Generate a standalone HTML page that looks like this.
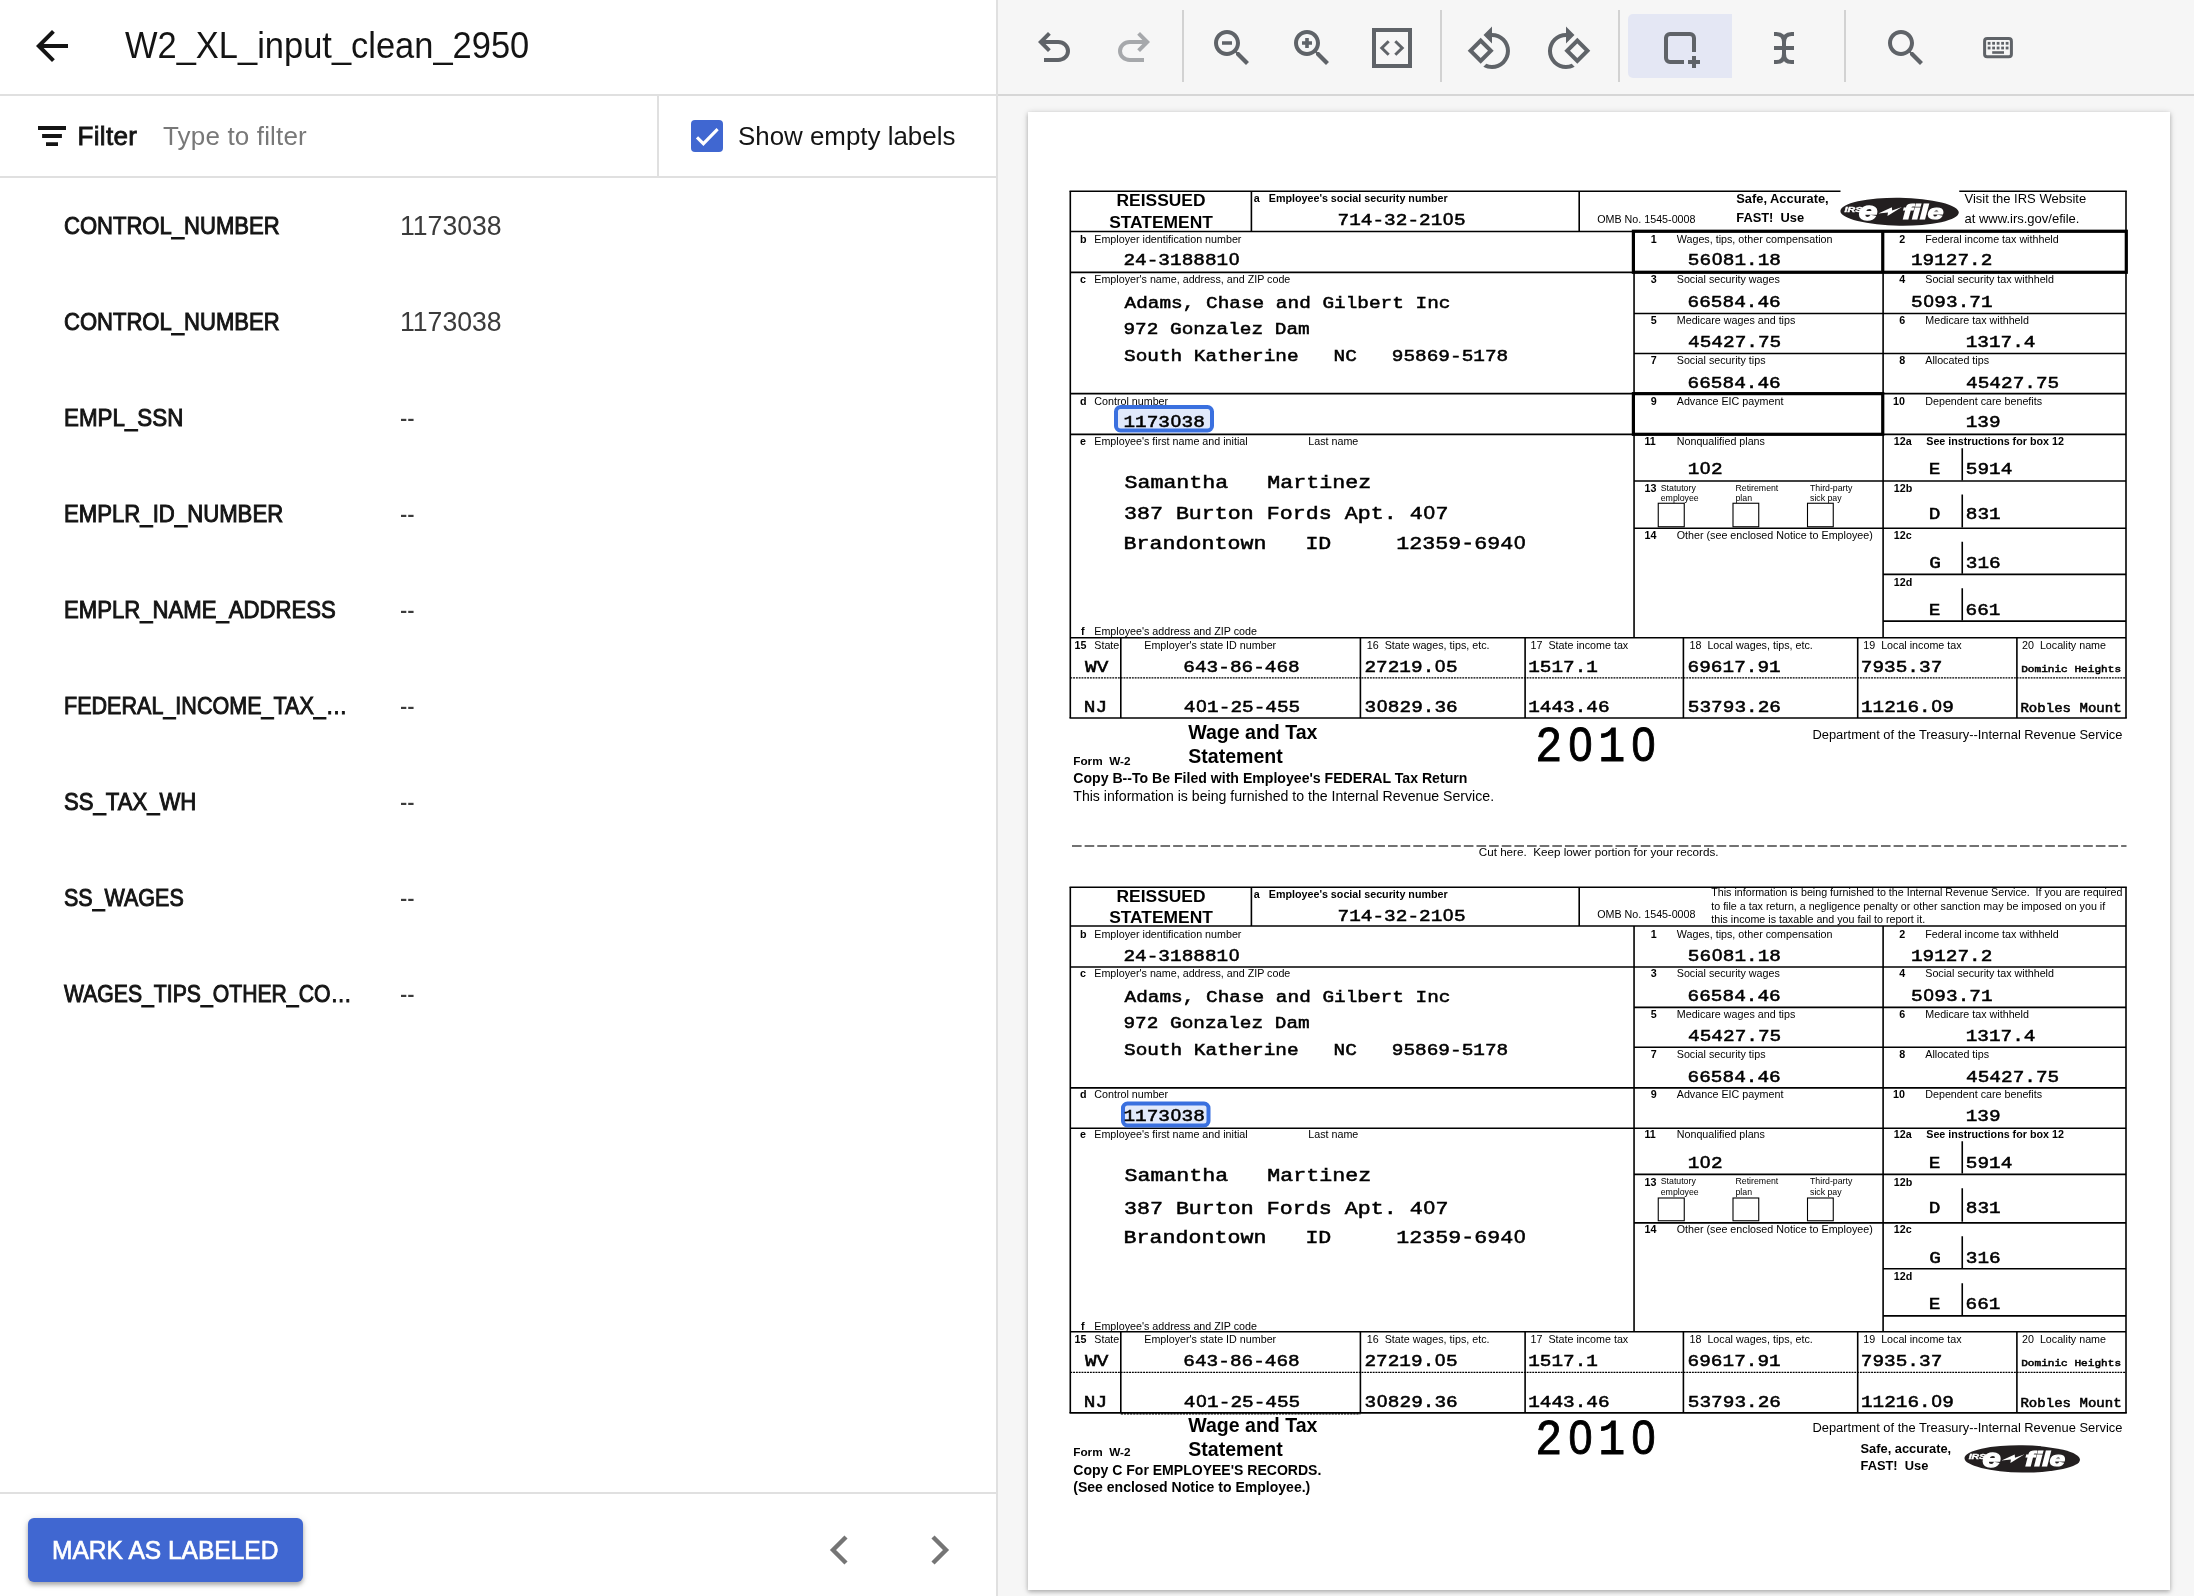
<!DOCTYPE html>
<html lang="en"><head><meta charset="utf-8"><title>W2_XL_input_clean_2950</title>
<style>
html,body{margin:0;padding:0}
body{width:2194px;height:1596px;overflow:hidden;position:relative;background:#fff;font-family:"Liberation Sans",Arial,sans-serif;color:#141414}
.abs{position:absolute}
#left{position:absolute;left:0;top:0;width:996px;height:1596px;background:#fff}
#vdiv{position:absolute;left:996px;top:0;width:2px;height:1596px;background:#e0e0e0}
#right{position:absolute;left:998px;top:0;width:1196px;height:1596px;background:#f6f6f6}
.hline{position:absolute;height:2px;background:#e0e0e0}
.title{position:absolute;left:125.3px;top:23.8px;font-size:36px;line-height:44px;white-space:nowrap;transform-origin:left center;color:#141414}
.lab{position:absolute;left:64px;height:40px;line-height:40px;font-size:24px;white-space:nowrap;transform-origin:left center;color:#141414;-webkit-text-stroke:0.95px #141414}
.val{position:absolute;height:40px;line-height:40px;font-size:28px;white-space:nowrap;transform-origin:left center;color:#3b3b3b}
.filt{position:absolute;top:116px;height:40px;line-height:40px;font-size:26px;white-space:nowrap}
#btn{position:absolute;left:28px;top:1518px;width:275px;height:64px;border-radius:6px;background:#4067d1;box-shadow:0 3px 4px rgba(0,0,0,.28),0 1px 8px rgba(0,0,0,.12)}
#btn span{position:absolute;left:24px;top:12px;line-height:40px;font-size:26px;color:#fff;white-space:nowrap;transform-origin:left center;-webkit-text-stroke:0.7px #fff}
#paper{position:absolute;left:1028px;top:112px;width:1142px;height:1478px;background:#fff;box-shadow:0 1px 6px rgba(0,0,0,.22),0 2px 4px rgba(0,0,0,.16)}
svg.doc{position:absolute;left:0;top:0;will-change:transform}
#left,#right{will-change:transform}
svg.doc .fs{font-family:"Liberation Sans",Arial,sans-serif}
svg.doc .fm{font-family:"Liberation Mono","Courier New",monospace;stroke:#000;stroke-width:0.6px}
svg.doc .b{font-weight:bold}
svg.doc text{white-space:pre}
svg.doc .yr{stroke-width:0.9px}
svg.doc .z{font-family:"Liberation Sans",Arial,sans-serif}
.sep{position:absolute;top:10px;width:2px;height:72px;background:#d2d2d2}
svg.ic{position:absolute;overflow:visible}
</style></head><body>
<div id="left">
<svg class="ic" style="left:36px;top:30px" width="32" height="32" viewBox="0 0 16 16"><path d="M16 7H3.83l5.59-5.59L8 0 0 8l8 8 1.41-1.41L3.83 9H16z" fill="#141414"/></svg>
<div class="title" style="transform:scaleX(0.9572)">W2_XL_input_clean_2950</div>
<div class="hline" style="left:0;top:94px;width:996px"></div>
<svg class="ic" style="left:38px;top:126px" width="28" height="20" viewBox="0 0 28 20"><path d="M0 0h28v3.900H0zM4.100 8.100h19.800V12H4.100zM8 16.200h12V20H8z" fill="#141414"/></svg>
<div class="filt" style="left:77.6px;color:#141414;letter-spacing:0.3px;-webkit-text-stroke:0.8px #141414">Filter</div>
<div class="filt" style="left:163px;color:#787878;letter-spacing:0.16px">Type to filter</div>
<div class="abs" style="left:657px;top:96px;width:2px;height:80px;background:#e0e0e0"></div>
<div class="abs" style="left:691px;top:120px;width:32px;height:32px;border-radius:4px;background:#4067d1"></div>
<svg class="ic" style="left:691px;top:120px" width="32" height="32" viewBox="0 0 32 32"><path d="M6 17.4L12.4 23.700L26.600 9.200" fill="none" stroke="#fff" stroke-width="3.1"/></svg>
<div class="filt" style="left:738px;color:#141414;transform-origin:left center;transform:scaleX(0.9960)">Show empty labels</div>
<div class="hline" style="left:0;top:176px;width:996px"></div>
<div class="lab" style="top:206px;transform:scaleX(0.9185)">CONTROL_NUMBER</div>
<div class="val" style="top:206px;left:400.3px;transform:scaleX(0.9499)">1173038</div>
<div class="lab" style="top:302px;transform:scaleX(0.9185)">CONTROL_NUMBER</div>
<div class="val" style="top:302px;left:400.3px;transform:scaleX(0.9499)">1173038</div>
<div class="lab" style="top:398px;transform:scaleX(0.9317)">EMPL_SSN</div>
<div class="val" style="top:398px;left:400px;transform:scaleX(0.78)">--</div>
<div class="lab" style="top:494px;transform:scaleX(0.9233)">EMPLR_ID_NUMBER</div>
<div class="val" style="top:494px;left:400px;transform:scaleX(0.78)">--</div>
<div class="lab" style="top:590px;transform:scaleX(0.9217)">EMPLR_NAME_ADDRESS</div>
<div class="val" style="top:590px;left:400px;transform:scaleX(0.78)">--</div>
<div class="lab" style="top:686px;transform:scaleX(0.8978)">FEDERAL_INCOME_TAX_…</div>
<div class="val" style="top:686px;left:400px;transform:scaleX(0.78)">--</div>
<div class="lab" style="top:782px;transform:scaleX(0.9214)">SS_TAX_WH</div>
<div class="val" style="top:782px;left:400px;transform:scaleX(0.78)">--</div>
<div class="lab" style="top:878px;transform:scaleX(0.8946)">SS_WAGES</div>
<div class="val" style="top:878px;left:400px;transform:scaleX(0.78)">--</div>
<div class="lab" style="top:974px;transform:scaleX(0.8826)">WAGES_TIPS_OTHER_CO…</div>
<div class="val" style="top:974px;left:400px;transform:scaleX(0.78)">--</div>
<div class="hline" style="left:0;top:1492px;width:996px"></div>
<div id="btn"><span style="transform:scaleX(0.9441)">MARK AS LABELED</span></div>
<svg class="ic" style="left:827px;top:1534px" width="24" height="32" viewBox="0 0 24 32"><path d="M19 3L6 16l13 13" fill="none" stroke="#757575" stroke-width="4.4"/></svg>
<svg class="ic" style="left:928px;top:1534px" width="24" height="32" viewBox="0 0 24 32"><path d="M5 3l13 13L5 29" fill="none" stroke="#757575" stroke-width="4.4"/></svg>
</div>
<div id="vdiv"></div>
<div id="right">
<div class="hline" style="left:0;top:94px;width:1196px;background:#d6d6d6"></div>
</div>
<svg class="ic" style="left:1030px;top:24px" width="48" height="48" viewBox="0 -960 960 960"><path d="M280-200v-80h284q63 0 109.5-40T720-420q0-60-46.5-100T564-560H312l104 104-56 56-200-200 200-200 56 56-104 104h252q97 0 166.5 63T800-420q0 94-69.500 157T564-200H280Z" fill="#5f6368"/></svg>
<svg class="ic" style="left:1110px;top:24px" width="48" height="48" viewBox="0 -960 960 960"><path d="M396-200q-97 0-166.500-63T160-420q0-94 69.500-157T396-640h252L544-744l56-56 200 200-200 200-56-56 104-104H396q-63 0-109.500 40T240-420q0 60 46.500 100T396-280h284v80H396Z" fill="#a6a8ab"/></svg>
<div class="sep" style="left:1182px"></div>
<div class="sep" style="left:1440px"></div>
<div class="sep" style="left:1618px"></div>
<div class="sep" style="left:1844px"></div>
<svg class="ic" style="left:1208px;top:24px" width="48" height="48" viewBox="0 0 24 24"><path d="M15.5 14h-.79l-.28-.27C15.41 12.59 16 11.11 16 9.5 16 5.91 13.09 3 9.5 3S3 5.91 3 9.5 5.91 16 9.5 16c1.61 0 3.09-.59 4.23-1.57l.27.28v.79l5 4.99L20.49 19l-4.99-5zm-6 0C7.01 14 5 11.99 5 9.5S7.01 5 9.5 5 14 7.01 14 9.5 11.990 14 9.5 14zM7 8.6h5v1.8H7z" fill="#5f6368"/></svg>
<svg class="ic" style="left:1288px;top:24px" width="48" height="48" viewBox="0 0 24 24"><path d="M15.5 14h-.79l-.28-.27C15.41 12.59 16 11.11 16 9.5 16 5.91 13.09 3 9.5 3S3 5.91 3 9.5 5.91 16 9.5 16c1.61 0 3.09-.59 4.23-1.57l.27.28v.79l5 4.99L20.49 19l-4.99-5zm-6 0C7.01 14 5 11.99 5 9.5S7.01 5 9.5 5 14 7.01 14 9.5 11.990 14 9.5 14zM12 10.4h-1.600v1.600H8.600v-1.600H7V8.600h1.600V7h1.800v1.600H12v1.800z" fill="#5f6368"/></svg>
<svg class="ic" style="left:1368px;top:24px" width="48" height="48" viewBox="0 0 48 48"><rect x="6" y="6" width="36" height="36" fill="none" stroke="#5f6368" stroke-width="4"/><path d="M20.700 17.200L13.800 24l6.900 6.800M27.300 17.200L34.200 24l-6.900 6.800" fill="none" stroke="#5f6368" stroke-width="3"/></svg>
<svg class="ic" style="left:1466.3px;top:24.6px" width="48" height="48" viewBox="0 0 24 24"><path d="M7.340 6.410L.860 12.900l6.490 6.480 6.490-6.480-6.500-6.490zM3.690 12.900l3.660-3.660L11 12.900l-3.660 3.660-3.650-3.660zm15.670-6.260C17.610 4.880 15.300 4 13 4V.760L8.760 5 13 9.240V6c1.790 0 3.580.68 4.950 2.050 2.730 2.730 2.730 7.170 0 9.900C16.580 19.320 14.790 20 13 20c-.97 0-1.940-.21-2.840-.61l-1.490 1.490C10.020 21.620 11.510 22 13 22c2.300 0 4.610-.88 6.360-2.640 3.520-3.510 3.520-9.210 0-12.720z" fill="#5f6368"/></svg>
<svg class="ic" style="left:1543.800px;top:24.600px" width="48" height="48" viewBox="0 0 24 24"><path transform="translate(24,0) scale(-1,1)" d="M7.340 6.410L.860 12.900l6.490 6.480 6.490-6.480-6.500-6.490zM3.690 12.900l3.660-3.660L11 12.900l-3.660 3.660-3.650-3.660zm15.670-6.260C17.610 4.880 15.300 4 13 4V.760L8.760 5 13 9.240V6c1.790 0 3.580.68 4.950 2.050 2.730 2.730 2.730 7.170 0 9.900C16.580 19.320 14.790 20 13 20c-.97 0-1.940-.21-2.840-.61l-1.490 1.490C10.020 21.620 11.510 22 13 22c2.300 0 4.610-.88 6.360-2.640 3.520-3.510 3.520-9.210 0-12.720z" fill="#5f6368"/></svg>
<div class="abs" style="left:1628px;top:14px;width:104px;height:64px;background:#e4e7f4;border-radius:5px 0 0 5px"></div>
<svg class="ic" style="left:1656px;top:24px" width="48" height="48" viewBox="1656 24 48 48"><path d="M1684 62H1670a4 4 0 0 1-4-4V38a4 4 0 0 1 4-4H1690a4 4 0 0 1 4 4V52M1688 62H1700M1694 56V68" fill="none" stroke="#5f6368" stroke-width="4"/></svg>
<svg class="ic" style="left:1760px;top:24px" width="48" height="48" viewBox="1760 24 48 48"><path d="M1774 34h2.500q7.500 0 7.500 8V54q0 8-7.500 8H1774M1794 34h-2.500q-7.500 0-7.500 8M1784 54q0 8 7.500 8H1794M1774 48H1794" fill="none" stroke="#5f6368" stroke-width="4"/></svg>
<svg class="ic" style="left:1882px;top:24px" width="48" height="48" viewBox="0 0 24 24"><path d="M15.5 14h-.79l-.28-.27C15.41 12.59 16 11.11 16 9.5 16 5.91 13.09 3 9.5 3S3 5.91 3 9.5 5.91 16 9.5 16c1.61 0 3.09-.59 4.23-1.57l.27.28v.79l5 4.99L20.49 19l-4.99-5zm-6 0C7.01 14 5 11.99 5 9.5S7.01 5 9.5 5 14 7.01 14 9.5 11.990 14 9.5 14z" fill="#5f6368"/></svg>
<svg class="ic" style="left:1974px;top:24px" width="48" height="48" viewBox="1974 24 48 48"><rect x="1984.600" y="38.600" width="26.800" height="18.200" rx="2.600" fill="none" stroke="#5f6368" stroke-width="3"/><rect x="1987.7" y="41.9" width="2.800" height="2.800" fill="#5f6368"/><rect x="1987.7" y="46.6" width="2.800" height="2.800" fill="#5f6368"/><rect x="1992.2" y="41.9" width="2.800" height="2.800" fill="#5f6368"/><rect x="1992.2" y="46.6" width="2.800" height="2.800" fill="#5f6368"/><rect x="1996.7" y="41.9" width="2.800" height="2.800" fill="#5f6368"/><rect x="1996.7" y="46.6" width="2.800" height="2.800" fill="#5f6368"/><rect x="2001.2" y="41.9" width="2.800" height="2.800" fill="#5f6368"/><rect x="2001.2" y="46.6" width="2.800" height="2.800" fill="#5f6368"/><rect x="2005.7" y="41.9" width="2.800" height="2.800" fill="#5f6368"/><rect x="2005.7" y="46.6" width="2.800" height="2.800" fill="#5f6368"/><rect x="1992.200" y="51.200" width="11.800" height="2.600" fill="#5f6368"/></svg>
<div id="paper"></div>
<svg class="doc" width="2194" height="1596" viewBox="0 0 2194 1596">
<g stroke="#000" fill="none">
<line x1="1069.5" y1="191.25" x2="1840.5" y2="191.25" stroke-width="1.6"/>
<line x1="1959.25" y1="191.25" x2="2126.8" y2="191.25" stroke-width="1.6"/>
<line x1="1070.3" y1="191.25" x2="1070.3" y2="718" stroke-width="1.6"/>
<line x1="2126.0" y1="191.25" x2="2126.0" y2="718" stroke-width="1.6"/>
<line x1="1069.5" y1="718" x2="2126.8" y2="718" stroke-width="1.6"/>
<line x1="1070.3" y1="231.45" x2="2126.0" y2="231.45" stroke-width="1.6"/>
<line x1="1070.3" y1="272.4" x2="2126.0" y2="272.4" stroke-width="1.6"/>
<line x1="1070.3" y1="393.65" x2="2126.0" y2="393.65" stroke-width="1.6"/>
<line x1="1070.3" y1="434.4" x2="2126.0" y2="434.4" stroke-width="1.6"/>
<line x1="1070.3" y1="637.7" x2="2126.0" y2="637.7" stroke-width="1.6"/>
<line x1="1634.05" y1="313.45" x2="2126.0" y2="313.45" stroke-width="1.6"/>
<line x1="1634.05" y1="353.5" x2="2126.0" y2="353.5" stroke-width="1.6"/>
<line x1="1634.05" y1="480.95" x2="2126.0" y2="480.95" stroke-width="1.6"/>
<line x1="1634.05" y1="528.25" x2="2126.0" y2="528.25" stroke-width="1.6"/>
<line x1="1883.1" y1="574.4" x2="2126.0" y2="574.4" stroke-width="1.6"/>
<line x1="1883.1" y1="621.15" x2="2126.0" y2="621.15" stroke-width="1.6"/>
<line x1="1251.4" y1="191.25" x2="1251.4" y2="231.45" stroke-width="1.6"/>
<line x1="1579.2" y1="191.25" x2="1579.2" y2="231.45" stroke-width="1.6"/>
<line x1="1634.05" y1="231.45" x2="1634.05" y2="637.7" stroke-width="1.6"/>
<line x1="1883.1" y1="231.45" x2="1883.1" y2="637.7" stroke-width="1.6"/>
<line x1="1120.8" y1="637.7" x2="1120.8" y2="718" stroke-width="1.6"/>
<line x1="1360.4" y1="637.7" x2="1360.4" y2="718" stroke-width="1.6"/>
<line x1="1525.1" y1="637.7" x2="1525.1" y2="718" stroke-width="1.6"/>
<line x1="1683.4" y1="637.7" x2="1683.4" y2="718" stroke-width="1.6"/>
<line x1="1857.7" y1="637.7" x2="1857.7" y2="718" stroke-width="1.6"/>
<line x1="2016.9" y1="637.7" x2="2016.9" y2="718" stroke-width="1.6"/>
<line x1="1070.3" y1="677.8" x2="2126.0" y2="677.8" stroke-width="1.3" stroke-dasharray="1.9 0.9"/>
<line x1="1962.25" y1="448.25" x2="1962.25" y2="480.5" stroke-width="1.6"/>
<line x1="1962.25" y1="494.5" x2="1962.25" y2="527.5" stroke-width="1.6"/>
<line x1="1962.25" y1="541.75" x2="1962.25" y2="573.75" stroke-width="1.6"/>
<line x1="1962.25" y1="588.25" x2="1962.25" y2="620.5" stroke-width="1.6"/>
<rect x="1658.25" y="503.25" width="26.0" height="23.5" stroke-width="1.1"/>
<rect x="1733" y="503.25" width="25.75" height="23.5" stroke-width="1.1"/>
<rect x="1807.5" y="503.25" width="25.75" height="23.5" stroke-width="1.1"/>
<rect x="1633.4" y="231.25" width="492.9000000000001" height="41.0" stroke-width="3.2"/>
<line x1="1882.75" y1="231.25" x2="1882.75" y2="272.25" stroke-width="3.2"/>
<rect x="1633.4" y="393.65" width="249.3499999999999" height="40.650000000000034" stroke-width="3.2"/>
</g>
<rect x="1116" y="407" width="96" height="23.5" rx="4.5" fill="#e1e9fb" stroke="#3a70df" stroke-width="4"/>
<g fill="#000">
<text class="fs b" x="1161" y="205.75" font-size="17.4" text-anchor="middle" xml:space="preserve">REISSUED</text>
<text class="fs b" x="1161" y="227.5" font-size="17.4" text-anchor="middle" xml:space="preserve">STATEMENT</text>
<text class="fs b" x="1253.75" y="202" font-size="10.72" xml:space="preserve">a</text>
<text class="fs b" x="1268.75" y="202" font-size="10.72" xml:space="preserve">Employee's social security number</text>
<text class="fm" transform="translate(1337.55 224.5) scale(1.0 0.885)" font-size="19.4" x="0.00 11.64 23.28 34.93 46.57 58.21 69.85 81.49 93.14 105.56 116.42" xml:space="preserve">714-32-21<tspan class="z" font-size="18.59">0</tspan>5</text>
<text class="fs" x="1597.2" y="222.5" font-size="10.72" xml:space="preserve">OMB No. 1545-0008</text>
<text class="fs b" x="1080" y="242.5" font-size="10.72" xml:space="preserve">b</text>
<text class="fs" x="1094.25" y="242.5" font-size="10.72" xml:space="preserve">Employer identification number</text>
<text class="fm" transform="translate(1123.44 265) scale(1.0 0.885)" font-size="19.4" x="0.00 11.64 23.28 34.93 46.57 58.21 69.85 81.49 93.14 105.56" xml:space="preserve">24-318881<tspan class="z" font-size="18.59">0</tspan></text>
<text class="fs b" x="1080" y="283.25" font-size="10.72" xml:space="preserve">c</text>
<text class="fs" x="1094.25" y="283.25" font-size="10.72" xml:space="preserve">Employer's name, address, and ZIP code</text>
<text class="fm" transform="translate(1124.5 307.5) scale(1.0 0.885)" font-size="19.4" x="0.00 11.64 23.28 34.93 46.57 58.21 69.85 81.49 93.14 104.78 116.42 128.06 139.70 151.35 162.99 174.63 186.27 197.91 209.55 221.20 232.84 244.48 256.12 267.76 279.41 291.05 302.69 314.33" xml:space="preserve">Adams, Chase and Gilbert Inc</text>
<text class="fm" transform="translate(1123.44 334.25) scale(1.0 0.885)" font-size="19.4" x="0.00 11.64 23.28 34.93 46.57 58.21 69.85 81.49 93.14 104.78 116.42 128.06 139.70 151.35 162.99 174.63" xml:space="preserve">972 Gonzalez Dam</text>
<text class="fm" transform="translate(1124.02 360.75) scale(1.0 0.885)" font-size="19.4" x="0.00 11.64 23.28 34.93 46.57 58.21 69.85 81.49 93.14 104.78 116.42 128.06 139.70 151.35 162.99 174.63 186.27 197.91 209.55 221.20 232.84 244.48 256.12 267.76 279.41 291.05 302.69 314.33 325.97 337.62 349.26 360.90 372.54" xml:space="preserve">South Katherine   NC   95869-5178</text>
<text class="fs b" x="1080" y="404.5" font-size="10.72" xml:space="preserve">d</text>
<text class="fs" x="1094.25" y="404.5" font-size="10.72" xml:space="preserve">Control number</text>
<text class="fm" transform="translate(1123.39 426.75) scale(1.0 0.885)" font-size="19.4" x="0.00 11.64 23.28 34.93 47.35 58.21 69.85" xml:space="preserve">1173<tspan class="z" font-size="18.59">0</tspan>38</text>
<text class="fs b" x="1080" y="445" font-size="10.72" xml:space="preserve">e</text>
<text class="fs" x="1094.25" y="445" font-size="10.72" xml:space="preserve">Employee's first name and initial</text>
<text class="fs" x="1308.25" y="445" font-size="10.72" xml:space="preserve">Last name</text>
<text class="fm" transform="translate(1124.43 487.5) scale(1.0 0.885)" font-size="21.64" x="0.00 12.99 25.97 38.96 51.94 64.93 77.92 90.90 103.89 116.88 129.86 142.85 155.83 168.82 181.81 194.79 207.78 220.76 233.75" xml:space="preserve">Samantha   Martinez</text>
<text class="fm" transform="translate(1123.95 519.25) scale(1.0 0.885)" font-size="21.64" x="0.00 12.99 25.97 38.96 51.94 64.93 77.92 90.90 103.89 116.88 129.86 142.85 155.83 168.82 181.81 194.79 207.78 220.76 233.75 246.74 259.72 272.71 285.70 299.56 311.67" xml:space="preserve">387 Burton Fords Apt. 4<tspan class="z" font-size="20.73">0</tspan>7</text>
<text class="fm" transform="translate(1123.57 548.75) scale(1.0 0.885)" font-size="21.64" x="0.00 12.99 25.97 38.96 51.94 64.93 77.92 90.90 103.89 116.88 129.86 142.85 155.83 168.82 181.81 194.79 207.78 220.76 233.75 246.74 259.72 272.71 285.70 298.68 311.67 324.65 337.64 350.63 363.61 376.60 390.46" xml:space="preserve">Brandontown   ID     12359-694<tspan class="z" font-size="20.73">0</tspan></text>
<text class="fs b" x="1081" y="635" font-size="10.72" xml:space="preserve">f</text>
<text class="fs" x="1094.25" y="635" font-size="10.72" xml:space="preserve">Employee's address and ZIP code</text>
<text class="fs b" x="1650.75" y="242.5" font-size="10.72" xml:space="preserve">1</text>
<text class="fs" x="1676.75" y="242.5" font-size="10.72" xml:space="preserve">Wages, tips, other compensation</text>
<text class="fs b" x="1650.75" y="283.25" font-size="10.72" xml:space="preserve">3</text>
<text class="fs" x="1676.75" y="283.25" font-size="10.72" xml:space="preserve">Social security wages</text>
<text class="fs b" x="1650.75" y="323.5" font-size="10.72" xml:space="preserve">5</text>
<text class="fs" x="1676.75" y="323.5" font-size="10.72" xml:space="preserve">Medicare wages and tips</text>
<text class="fs b" x="1650.75" y="363.75" font-size="10.72" xml:space="preserve">7</text>
<text class="fs" x="1676.75" y="363.75" font-size="10.72" xml:space="preserve">Social security tips</text>
<text class="fs b" x="1650.75" y="404.5" font-size="10.72" xml:space="preserve">9</text>
<text class="fs" x="1676.75" y="404.5" font-size="10.72" xml:space="preserve">Advance EIC payment</text>
<text class="fs b" x="1644.5" y="445" font-size="10.72" xml:space="preserve">11</text>
<text class="fs" x="1676.75" y="445" font-size="10.72" xml:space="preserve">Nonqualified plans</text>
<text class="fs b" x="1899.25" y="242.5" font-size="10.72" xml:space="preserve">2</text>
<text class="fs" x="1925.25" y="242.5" font-size="10.72" xml:space="preserve">Federal income tax withheld</text>
<text class="fs b" x="1899.25" y="283.25" font-size="10.72" xml:space="preserve">4</text>
<text class="fs" x="1925.25" y="283.25" font-size="10.72" xml:space="preserve">Social security tax withheld</text>
<text class="fs b" x="1899.25" y="323.5" font-size="10.72" xml:space="preserve">6</text>
<text class="fs" x="1925.25" y="323.5" font-size="10.72" xml:space="preserve">Medicare tax withheld</text>
<text class="fs b" x="1899.25" y="363.75" font-size="10.72" xml:space="preserve">8</text>
<text class="fs" x="1925.25" y="363.75" font-size="10.72" xml:space="preserve">Allocated tips</text>
<text class="fs b" x="1893" y="404.5" font-size="10.72" xml:space="preserve">10</text>
<text class="fs" x="1925.25" y="404.5" font-size="10.72" xml:space="preserve">Dependent care benefits</text>
<text class="fm" transform="translate(1687.84 265) scale(1.0 0.885)" font-size="19.4" x="0.00 11.64 24.07 34.93 46.57 58.21 69.85 81.49" xml:space="preserve">56<tspan class="z" font-size="18.59">0</tspan>81.18</text>
<text class="fm" transform="translate(1687.6 307) scale(1.0 0.885)" font-size="19.4" x="0.00 11.64 23.28 34.93 46.57 58.21 69.85 81.49" xml:space="preserve">66584.46</text>
<text class="fm" transform="translate(1688.08 347) scale(1.0 0.885)" font-size="19.4" x="0.00 11.64 23.28 34.93 46.57 58.21 69.85 81.49" xml:space="preserve">45427.75</text>
<text class="fm" transform="translate(1687.6 387.5) scale(1.0 0.885)" font-size="19.4" x="0.00 11.64 23.28 34.93 46.57 58.21 69.85 81.49" xml:space="preserve">66584.46</text>
<text class="fm" transform="translate(1687.64 474.25) scale(1.0 0.885)" font-size="19.4" x="0.00 12.43 23.28" xml:space="preserve">1<tspan class="z" font-size="18.59">0</tspan>2</text>
<text class="fm" transform="translate(1910.89 265) scale(1.0 0.885)" font-size="19.4" x="0.00 11.64 23.28 34.93 46.57 58.21 69.85" xml:space="preserve">19127.2</text>
<text class="fm" transform="translate(1911.09 307) scale(1.0 0.885)" font-size="19.4" x="0.00 12.43 23.28 34.93 46.57 58.21 69.85" xml:space="preserve">5<tspan class="z" font-size="18.59">0</tspan>93.71</text>
<text class="fm" transform="translate(1965.64 347) scale(1.0 0.885)" font-size="19.4" x="0.00 11.64 23.28 34.93 46.57 58.21" xml:space="preserve">1317.4</text>
<text class="fm" transform="translate(1966.08 387.5) scale(1.0 0.885)" font-size="19.4" x="0.00 11.64 23.28 34.93 46.57 58.21 69.85 81.49" xml:space="preserve">45427.75</text>
<text class="fm" transform="translate(1965.64 426.75) scale(1.0 0.885)" font-size="19.4" x="0.00 11.64 23.28" xml:space="preserve">139</text>
<text class="fs b" x="1893.75" y="445" font-size="10.72" xml:space="preserve">12a</text>
<text class="fm" transform="translate(1928.75 474.25) scale(1.0 0.885)" font-size="19.4" x="0.00" xml:space="preserve">E</text>
<text class="fm" transform="translate(1965.84 474.25) scale(1.0 0.885)" font-size="19.4" x="0.00 11.64 23.28 34.93" xml:space="preserve">5914</text>
<text class="fs b" x="1893.75" y="492" font-size="10.72" xml:space="preserve">12b</text>
<text class="fm" transform="translate(1928.75 518.75) scale(1.0 0.885)" font-size="19.4" x="0.00" xml:space="preserve">D</text>
<text class="fm" transform="translate(1965.79 518.75) scale(1.0 0.885)" font-size="19.4" x="0.00 11.64 23.28" xml:space="preserve">831</text>
<text class="fs b" x="1893.75" y="538.75" font-size="10.72" xml:space="preserve">12c</text>
<text class="fm" transform="translate(1929.23 568.25) scale(1.0 0.885)" font-size="19.4" x="0.00" xml:space="preserve">G</text>
<text class="fm" transform="translate(1965.84 568.25) scale(1.0 0.885)" font-size="19.4" x="0.00 11.64 23.28" xml:space="preserve">316</text>
<text class="fs b" x="1893.75" y="585.75" font-size="10.72" xml:space="preserve">12d</text>
<text class="fm" transform="translate(1928.75 614.5) scale(1.0 0.885)" font-size="19.4" x="0.00" xml:space="preserve">E</text>
<text class="fm" transform="translate(1965.6 614.5) scale(1.0 0.885)" font-size="19.4" x="0.00 11.64 23.28" xml:space="preserve">661</text>
<text class="fs b" x="1926.25" y="445" font-size="10.72" xml:space="preserve">See instructions for box 12</text>
<text class="fs b" x="1644.5" y="492" font-size="10.72" xml:space="preserve">13</text>
<text class="fs" x="1660.75" y="490.75" font-size="8.75" xml:space="preserve">Statutory</text>
<text class="fs" x="1660.75" y="501.25" font-size="8.75" xml:space="preserve">employee</text>
<text class="fs" x="1735.5" y="490.75" font-size="8.75" xml:space="preserve">Retirement</text>
<text class="fs" x="1735.5" y="501.25" font-size="8.75" xml:space="preserve">plan</text>
<text class="fs" x="1810" y="490.75" font-size="8.75" xml:space="preserve">Third-party</text>
<text class="fs" x="1810" y="501.25" font-size="8.75" xml:space="preserve">sick pay</text>
<text class="fs b" x="1644.5" y="538.75" font-size="10.72" xml:space="preserve">14</text>
<text class="fs" x="1676.75" y="538.75" font-size="10.72" xml:space="preserve">Other (see enclosed Notice to Employee)</text>
<text class="fs b" x="1074.5" y="648.75" font-size="10.72" xml:space="preserve">15</text>
<text class="fs" x="1094.25" y="648.75" font-size="10.72" xml:space="preserve">State</text>
<text class="fs" x="1144.25" y="648.75" font-size="10.72" xml:space="preserve">Employer's state ID number</text>
<text class="fs" x="1366.75" y="648.75" font-size="10.72" xml:space="preserve">16  State wages, tips, etc.</text>
<text class="fs" x="1530.5" y="648.75" font-size="10.72" xml:space="preserve">17  State income tax</text>
<text class="fs" x="1689.5" y="648.75" font-size="10.72" xml:space="preserve">18  Local wages, tips, etc.</text>
<text class="fs" x="1863.25" y="648.75" font-size="10.72" xml:space="preserve">19  Local income tax</text>
<text class="fs" x="2022" y="648.75" font-size="10.72" xml:space="preserve">20  Locality name</text>
<text class="fm" transform="translate(1085.0 671.75) scale(1.0 0.885)" font-size="19.4" x="0.00 11.64" xml:space="preserve">WV</text>
<text class="fm" transform="translate(1183.34 671.75) scale(1.0 0.885)" font-size="19.4" x="0.00 11.64 23.28 34.93 46.57 58.21 69.85 81.49 93.14 104.78" xml:space="preserve">643-86-468</text>
<text class="fm" transform="translate(1364.44 671.75) scale(1.0 0.885)" font-size="19.4" x="0.00 11.64 23.28 34.93 46.57 58.21 70.64 81.49" xml:space="preserve">27219.<tspan class="z" font-size="18.59">0</tspan>5</text>
<text class="fm" transform="translate(1528.14 671.75) scale(1.0 0.885)" font-size="19.4" x="0.00 11.64 23.28 34.93 46.57 58.21" xml:space="preserve">1517.1</text>
<text class="fm" transform="translate(1687.6 671.75) scale(1.0 0.885)" font-size="19.4" x="0.00 11.64 23.28 34.93 46.57 58.21 69.85 81.49" xml:space="preserve">69617.91</text>
<text class="fm" transform="translate(1860.8 671.75) scale(1.0 0.885)" font-size="19.4" x="0.00 11.64 23.28 34.93 46.57 58.21 69.85" xml:space="preserve">7935.37</text>
<text class="fm" transform="translate(1083.75 711.5) scale(1.0 0.885)" font-size="19.4" x="0.00 11.64" xml:space="preserve">NJ</text>
<text class="fm" transform="translate(1183.83 711.5) scale(1.0 0.885)" font-size="19.4" x="0.00 12.43 23.28 34.93 46.57 58.21 69.85 81.49 93.14 104.78" xml:space="preserve">4<tspan class="z" font-size="18.59">0</tspan>1-25-455</text>
<text class="fm" transform="translate(1364.59 711.5) scale(1.0 0.885)" font-size="19.4" x="0.00 12.43 23.28 34.93 46.57 58.21 69.85 81.49" xml:space="preserve">3<tspan class="z" font-size="18.59">0</tspan>829.36</text>
<text class="fm" transform="translate(1528.14 711.5) scale(1.0 0.885)" font-size="19.4" x="0.00 11.64 23.28 34.93 46.57 58.21 69.85" xml:space="preserve">1443.46</text>
<text class="fm" transform="translate(1687.84 711.5) scale(1.0 0.885)" font-size="19.4" x="0.00 11.64 23.28 34.93 46.57 58.21 69.85 81.49" xml:space="preserve">53793.26</text>
<text class="fm" transform="translate(1860.89 711.5) scale(1.0 0.885)" font-size="19.4" x="0.00 11.64 23.28 34.93 46.57 58.21 70.64 81.49" xml:space="preserve">11216.<tspan class="z" font-size="18.59">0</tspan>9</text>
<text class="fm" transform="translate(2021.16 671.75) scale(1.0 0.885)" font-size="11.1" x="0.00 6.66 13.32 19.98 26.64 33.31 39.97 46.63 53.29 59.95 66.61 73.27 79.93 86.59 93.26" xml:space="preserve">Dominic Heights</text>
<text class="fm" transform="translate(2020.43 711.5) scale(1.0 0.885)" font-size="14.06" x="0.00 8.44 16.87 25.31 33.75 42.19 50.62 59.06 67.50 75.94 84.37 92.81" xml:space="preserve">Robles Mount</text>
<text class="fs b" x="1188.25" y="738.75" font-size="19.55" xml:space="preserve">Wage and Tax</text>
<text class="fs b" x="1188.25" y="763" font-size="19.55" xml:space="preserve">Statement</text>
<text class="fs b" x="1073.25" y="764.5" font-size="11.76" xml:space="preserve">Form  W-2</text>
<text class="fs" x="1812.5" y="738.75" font-size="12.88" xml:space="preserve">Department of the Treasury--Internal Revenue Service</text>
<text class="fm yr" transform="translate(1535.35 760.5) scale(0.9 1)" font-size="50" x="0.00 36.93 69.81 106.74" xml:space="preserve">2<tspan class="z" font-size="47.90">0</tspan>1<tspan class="z" font-size="47.90">0</tspan></text>
</g>
<g fill="#000">
<text class="fs b" x="1736.25" y="202.5" font-size="12.87" xml:space="preserve">Safe, Accurate,</text>
<text class="fs b" x="1736.25" y="222" font-size="12.87" xml:space="preserve">FAST!  Use</text>
<text class="fs" x="1964.5" y="203" font-size="13.0" xml:space="preserve">Visit the IRS Website</text>
<text class="fs" x="1964.5" y="222.5" font-size="13.0" xml:space="preserve">at www.irs.gov/efile.</text>
<text class="fs b" x="1073.25" y="783.25" font-size="14.1" xml:space="preserve">Copy B--To Be Filed with Employee's FEDERAL Tax Return</text>
<text class="fs" x="1073.25" y="800.75" font-size="14.13" xml:space="preserve">This information is being furnished to the Internal Revenue Service.</text>
</g>
<g transform="translate(1899.6,211.75) scale(1.0034)">
<ellipse cx="0" cy="0" rx="59" ry="13.9" fill="#231f20" transform="rotate(0.8)"/>
<g fill="#fff" stroke="#fff" font-family="Liberation Sans, Arial, sans-serif" font-weight="bold" font-style="italic">
<text x="-54.8" y="0.3" font-size="8" stroke-width="0.4" textLength="17.8" lengthAdjust="spacingAndGlyphs">IRS</text>
<text x="-40.6" y="7.8" font-size="25.5" stroke-width="1.3" textLength="18.6" lengthAdjust="spacingAndGlyphs">e</text>
<text x="3.2" y="7.6" font-size="20.6" stroke-width="1.2" textLength="40.5" lengthAdjust="spacingAndGlyphs">file</text>
</g>
<path d="M-21.2 1.75 L-7.7 -4.45 L-7.4 -1.15 L2.3 -4.65 L-12.1 4.15 L-11.6 0.65 Z" fill="#fff"/>
</g>
<line x1="1072" y1="846" x2="2126.5" y2="846" stroke="#727272" stroke-width="2" stroke-dasharray="9.6 3.04"/>
<g fill="#000">
<text class="fs" x="1478.75" y="855.5" font-size="11.67" xml:space="preserve">Cut here.  Keep lower portion for your records.</text>
</g>
<g stroke="#000" fill="none">
<line x1="1069.5" y1="887.25" x2="2126.8" y2="887.25" stroke-width="1.6"/>
<line x1="1070.3" y1="887.25" x2="1070.3" y2="1412.9" stroke-width="1.6"/>
<line x1="2126.0" y1="887.25" x2="2126.0" y2="1412.9" stroke-width="1.6"/>
<line x1="1069.5" y1="1412.9" x2="2126.8" y2="1412.9" stroke-width="1.6"/>
<line x1="1070.3" y1="926.0" x2="2126.0" y2="926.0" stroke-width="1.6"/>
<line x1="1070.3" y1="967.0" x2="2126.0" y2="967.0" stroke-width="1.6"/>
<line x1="1070.3" y1="1087.9" x2="2126.0" y2="1087.9" stroke-width="1.6"/>
<line x1="1070.3" y1="1128.3" x2="2126.0" y2="1128.3" stroke-width="1.6"/>
<line x1="1070.3" y1="1331.7" x2="2126.0" y2="1331.7" stroke-width="1.6"/>
<line x1="1634.05" y1="1007.4" x2="2126.0" y2="1007.4" stroke-width="1.6"/>
<line x1="1634.05" y1="1047.3" x2="2126.0" y2="1047.3" stroke-width="1.6"/>
<line x1="1634.05" y1="1174.35" x2="2126.0" y2="1174.35" stroke-width="1.6"/>
<line x1="1634.05" y1="1222.85" x2="2126.0" y2="1222.85" stroke-width="1.6"/>
<line x1="1883.1" y1="1268.7" x2="2126.0" y2="1268.7" stroke-width="1.6"/>
<line x1="1883.1" y1="1315.9" x2="2126.0" y2="1315.9" stroke-width="1.6"/>
<line x1="1251.4" y1="887.25" x2="1251.4" y2="926.0" stroke-width="1.6"/>
<line x1="1579.2" y1="887.25" x2="1579.2" y2="926.0" stroke-width="1.6"/>
<line x1="1634.05" y1="926.0" x2="1634.05" y2="1331.7" stroke-width="1.6"/>
<line x1="1883.1" y1="926.0" x2="1883.1" y2="1331.7" stroke-width="1.6"/>
<line x1="1120.8" y1="1331.7" x2="1120.8" y2="1412.9" stroke-width="1.6"/>
<line x1="1360.4" y1="1331.7" x2="1360.4" y2="1412.9" stroke-width="1.6"/>
<line x1="1525.1" y1="1331.7" x2="1525.1" y2="1412.9" stroke-width="1.6"/>
<line x1="1683.4" y1="1331.7" x2="1683.4" y2="1412.9" stroke-width="1.6"/>
<line x1="1857.7" y1="1331.7" x2="1857.7" y2="1412.9" stroke-width="1.6"/>
<line x1="2016.9" y1="1331.7" x2="2016.9" y2="1412.9" stroke-width="1.6"/>
<line x1="1070.3" y1="1372.4" x2="2126.0" y2="1372.4" stroke-width="1.3" stroke-dasharray="1.9 0.9"/>
<line x1="1120.8" y1="1413.8000000000002" x2="1360.4" y2="1413.8000000000002" stroke-width="1.2" stroke-dasharray="2.2 0.9"/>
<line x1="1962.25" y1="1141.25" x2="1962.25" y2="1173.5" stroke-width="1.6"/>
<line x1="1962.25" y1="1188.25" x2="1962.25" y2="1221.75" stroke-width="1.6"/>
<line x1="1962.25" y1="1236.25" x2="1962.25" y2="1268.25" stroke-width="1.6"/>
<line x1="1962.25" y1="1283.25" x2="1962.25" y2="1315" stroke-width="1.6"/>
<rect x="1658.25" y="1198" width="26.0" height="22.75" stroke-width="1.1"/>
<rect x="1733" y="1198" width="25.75" height="22.75" stroke-width="1.1"/>
<rect x="1807.5" y="1198" width="25.75" height="22.75" stroke-width="1.1"/>
</g>
<rect x="1123" y="1103.5" width="85.5" height="22" rx="4.5" fill="#e1e9fb" stroke="#3a70df" stroke-width="4"/>
<g fill="#000">
<text class="fs b" x="1161" y="901.75" font-size="17.4" text-anchor="middle" xml:space="preserve">REISSUED</text>
<text class="fs b" x="1161" y="923.25" font-size="17.4" text-anchor="middle" xml:space="preserve">STATEMENT</text>
<text class="fs b" x="1253.75" y="897.5" font-size="10.72" xml:space="preserve">a</text>
<text class="fs b" x="1268.75" y="897.5" font-size="10.72" xml:space="preserve">Employee's social security number</text>
<text class="fm" transform="translate(1337.55 920.5) scale(1.0 0.885)" font-size="19.4" x="0.00 11.64 23.28 34.93 46.57 58.21 69.85 81.49 93.14 105.56 116.42" xml:space="preserve">714-32-21<tspan class="z" font-size="18.59">0</tspan>5</text>
<text class="fs" x="1597.2" y="917.5" font-size="10.72" xml:space="preserve">OMB No. 1545-0008</text>
<text class="fs b" x="1080" y="937.5" font-size="10.72" xml:space="preserve">b</text>
<text class="fs" x="1094.25" y="937.5" font-size="10.72" xml:space="preserve">Employer identification number</text>
<text class="fm" transform="translate(1123.44 960.75) scale(1.0 0.885)" font-size="19.4" x="0.00 11.64 23.28 34.93 46.57 58.21 69.85 81.49 93.14 105.56" xml:space="preserve">24-318881<tspan class="z" font-size="18.59">0</tspan></text>
<text class="fs b" x="1080" y="977" font-size="10.72" xml:space="preserve">c</text>
<text class="fs" x="1094.25" y="977" font-size="10.72" xml:space="preserve">Employer's name, address, and ZIP code</text>
<text class="fm" transform="translate(1124.5 1001.75) scale(1.0 0.885)" font-size="19.4" x="0.00 11.64 23.28 34.93 46.57 58.21 69.85 81.49 93.14 104.78 116.42 128.06 139.70 151.35 162.99 174.63 186.27 197.91 209.55 221.20 232.84 244.48 256.12 267.76 279.41 291.05 302.69 314.33" xml:space="preserve">Adams, Chase and Gilbert Inc</text>
<text class="fm" transform="translate(1123.44 1028.25) scale(1.0 0.885)" font-size="19.4" x="0.00 11.64 23.28 34.93 46.57 58.21 69.85 81.49 93.14 104.78 116.42 128.06 139.70 151.35 162.99 174.63" xml:space="preserve">972 Gonzalez Dam</text>
<text class="fm" transform="translate(1124.02 1055) scale(1.0 0.885)" font-size="19.4" x="0.00 11.64 23.28 34.93 46.57 58.21 69.85 81.49 93.14 104.78 116.42 128.06 139.70 151.35 162.99 174.63 186.27 197.91 209.55 221.20 232.84 244.48 256.12 267.76 279.41 291.05 302.69 314.33 325.97 337.62 349.26 360.90 372.54" xml:space="preserve">South Katherine   NC   95869-5178</text>
<text class="fs b" x="1080" y="1098.25" font-size="10.72" xml:space="preserve">d</text>
<text class="fs" x="1094.25" y="1098.25" font-size="10.72" xml:space="preserve">Control number</text>
<text class="fm" transform="translate(1123.39 1121.25) scale(1.0 0.885)" font-size="19.4" x="0.00 11.64 23.28 34.93 47.35 58.21 69.85" xml:space="preserve">1173<tspan class="z" font-size="18.59">0</tspan>38</text>
<text class="fs b" x="1080" y="1138.25" font-size="10.72" xml:space="preserve">e</text>
<text class="fs" x="1094.25" y="1138.25" font-size="10.72" xml:space="preserve">Employee's first name and initial</text>
<text class="fs" x="1308.25" y="1138.25" font-size="10.72" xml:space="preserve">Last name</text>
<text class="fm" transform="translate(1124.43 1180.75) scale(1.0 0.885)" font-size="21.64" x="0.00 12.99 25.97 38.96 51.94 64.93 77.92 90.90 103.89 116.88 129.86 142.85 155.83 168.82 181.81 194.79 207.78 220.76 233.75" xml:space="preserve">Samantha   Martinez</text>
<text class="fm" transform="translate(1123.95 1213.75) scale(1.0 0.885)" font-size="21.64" x="0.00 12.99 25.97 38.96 51.94 64.93 77.92 90.90 103.89 116.88 129.86 142.85 155.83 168.82 181.81 194.79 207.78 220.76 233.75 246.74 259.72 272.71 285.70 299.56 311.67" xml:space="preserve">387 Burton Fords Apt. 4<tspan class="z" font-size="20.73">0</tspan>7</text>
<text class="fm" transform="translate(1123.57 1242.5) scale(1.0 0.885)" font-size="21.64" x="0.00 12.99 25.97 38.96 51.94 64.93 77.92 90.90 103.89 116.88 129.86 142.85 155.83 168.82 181.81 194.79 207.78 220.76 233.75 246.74 259.72 272.71 285.70 298.68 311.67 324.65 337.64 350.63 363.61 376.60 390.46" xml:space="preserve">Brandontown   ID     12359-694<tspan class="z" font-size="20.73">0</tspan></text>
<text class="fs b" x="1081" y="1329.5" font-size="10.72" xml:space="preserve">f</text>
<text class="fs" x="1094.25" y="1329.5" font-size="10.72" xml:space="preserve">Employee's address and ZIP code</text>
<text class="fs b" x="1650.75" y="937.5" font-size="10.72" xml:space="preserve">1</text>
<text class="fs" x="1676.75" y="937.5" font-size="10.72" xml:space="preserve">Wages, tips, other compensation</text>
<text class="fs b" x="1650.75" y="977" font-size="10.72" xml:space="preserve">3</text>
<text class="fs" x="1676.75" y="977" font-size="10.72" xml:space="preserve">Social security wages</text>
<text class="fs b" x="1650.75" y="1017.75" font-size="10.72" xml:space="preserve">5</text>
<text class="fs" x="1676.75" y="1017.75" font-size="10.72" xml:space="preserve">Medicare wages and tips</text>
<text class="fs b" x="1650.75" y="1058.25" font-size="10.72" xml:space="preserve">7</text>
<text class="fs" x="1676.75" y="1058.25" font-size="10.72" xml:space="preserve">Social security tips</text>
<text class="fs b" x="1650.75" y="1098.25" font-size="10.72" xml:space="preserve">9</text>
<text class="fs" x="1676.75" y="1098.25" font-size="10.72" xml:space="preserve">Advance EIC payment</text>
<text class="fs b" x="1644.5" y="1138.25" font-size="10.72" xml:space="preserve">11</text>
<text class="fs" x="1676.75" y="1138.25" font-size="10.72" xml:space="preserve">Nonqualified plans</text>
<text class="fs b" x="1899.25" y="937.5" font-size="10.72" xml:space="preserve">2</text>
<text class="fs" x="1925.25" y="937.5" font-size="10.72" xml:space="preserve">Federal income tax withheld</text>
<text class="fs b" x="1899.25" y="977" font-size="10.72" xml:space="preserve">4</text>
<text class="fs" x="1925.25" y="977" font-size="10.72" xml:space="preserve">Social security tax withheld</text>
<text class="fs b" x="1899.25" y="1017.75" font-size="10.72" xml:space="preserve">6</text>
<text class="fs" x="1925.25" y="1017.75" font-size="10.72" xml:space="preserve">Medicare tax withheld</text>
<text class="fs b" x="1899.25" y="1058.25" font-size="10.72" xml:space="preserve">8</text>
<text class="fs" x="1925.25" y="1058.25" font-size="10.72" xml:space="preserve">Allocated tips</text>
<text class="fs b" x="1893" y="1098.25" font-size="10.72" xml:space="preserve">10</text>
<text class="fs" x="1925.25" y="1098.25" font-size="10.72" xml:space="preserve">Dependent care benefits</text>
<text class="fm" transform="translate(1687.84 960.75) scale(1.0 0.885)" font-size="19.4" x="0.00 11.64 24.07 34.93 46.57 58.21 69.85 81.49" xml:space="preserve">56<tspan class="z" font-size="18.59">0</tspan>81.18</text>
<text class="fm" transform="translate(1687.6 1001.25) scale(1.0 0.885)" font-size="19.4" x="0.00 11.64 23.28 34.93 46.57 58.21 69.85 81.49" xml:space="preserve">66584.46</text>
<text class="fm" transform="translate(1688.08 1041.25) scale(1.0 0.885)" font-size="19.4" x="0.00 11.64 23.28 34.93 46.57 58.21 69.85 81.49" xml:space="preserve">45427.75</text>
<text class="fm" transform="translate(1687.6 1081.5) scale(1.0 0.885)" font-size="19.4" x="0.00 11.64 23.28 34.93 46.57 58.21 69.85 81.49" xml:space="preserve">66584.46</text>
<text class="fm" transform="translate(1687.64 1168) scale(1.0 0.885)" font-size="19.4" x="0.00 12.43 23.28" xml:space="preserve">1<tspan class="z" font-size="18.59">0</tspan>2</text>
<text class="fm" transform="translate(1910.89 960.75) scale(1.0 0.885)" font-size="19.4" x="0.00 11.64 23.28 34.93 46.57 58.21 69.85" xml:space="preserve">19127.2</text>
<text class="fm" transform="translate(1911.09 1001.25) scale(1.0 0.885)" font-size="19.4" x="0.00 12.43 23.28 34.93 46.57 58.21 69.85" xml:space="preserve">5<tspan class="z" font-size="18.59">0</tspan>93.71</text>
<text class="fm" transform="translate(1965.64 1041.25) scale(1.0 0.885)" font-size="19.4" x="0.00 11.64 23.28 34.93 46.57 58.21" xml:space="preserve">1317.4</text>
<text class="fm" transform="translate(1966.08 1081.5) scale(1.0 0.885)" font-size="19.4" x="0.00 11.64 23.28 34.93 46.57 58.21 69.85 81.49" xml:space="preserve">45427.75</text>
<text class="fm" transform="translate(1965.64 1121.25) scale(1.0 0.885)" font-size="19.4" x="0.00 11.64 23.28" xml:space="preserve">139</text>
<text class="fs b" x="1893.75" y="1138.25" font-size="10.72" xml:space="preserve">12a</text>
<text class="fm" transform="translate(1928.75 1168) scale(1.0 0.885)" font-size="19.4" x="0.00" xml:space="preserve">E</text>
<text class="fm" transform="translate(1965.84 1168) scale(1.0 0.885)" font-size="19.4" x="0.00 11.64 23.28 34.93" xml:space="preserve">5914</text>
<text class="fs b" x="1893.75" y="1185.5" font-size="10.72" xml:space="preserve">12b</text>
<text class="fm" transform="translate(1928.75 1213.25) scale(1.0 0.885)" font-size="19.4" x="0.00" xml:space="preserve">D</text>
<text class="fm" transform="translate(1965.79 1213.25) scale(1.0 0.885)" font-size="19.4" x="0.00 11.64 23.28" xml:space="preserve">831</text>
<text class="fs b" x="1893.75" y="1233" font-size="10.72" xml:space="preserve">12c</text>
<text class="fm" transform="translate(1929.23 1262.6) scale(1.0 0.885)" font-size="19.4" x="0.00" xml:space="preserve">G</text>
<text class="fm" transform="translate(1965.84 1262.6) scale(1.0 0.885)" font-size="19.4" x="0.00 11.64 23.28" xml:space="preserve">316</text>
<text class="fs b" x="1893.75" y="1280" font-size="10.72" xml:space="preserve">12d</text>
<text class="fm" transform="translate(1928.75 1309) scale(1.0 0.885)" font-size="19.4" x="0.00" xml:space="preserve">E</text>
<text class="fm" transform="translate(1965.6 1309) scale(1.0 0.885)" font-size="19.4" x="0.00 11.64 23.28" xml:space="preserve">661</text>
<text class="fs b" x="1926.25" y="1138.25" font-size="10.72" xml:space="preserve">See instructions for box 12</text>
<text class="fs b" x="1644.5" y="1185.5" font-size="10.72" xml:space="preserve">13</text>
<text class="fs" x="1660.75" y="1184.25" font-size="8.75" xml:space="preserve">Statutory</text>
<text class="fs" x="1660.75" y="1195.25" font-size="8.75" xml:space="preserve">employee</text>
<text class="fs" x="1735.5" y="1184.25" font-size="8.75" xml:space="preserve">Retirement</text>
<text class="fs" x="1735.5" y="1195.25" font-size="8.75" xml:space="preserve">plan</text>
<text class="fs" x="1810" y="1184.25" font-size="8.75" xml:space="preserve">Third-party</text>
<text class="fs" x="1810" y="1195.25" font-size="8.75" xml:space="preserve">sick pay</text>
<text class="fs b" x="1644.5" y="1233" font-size="10.72" xml:space="preserve">14</text>
<text class="fs" x="1676.75" y="1233" font-size="10.72" xml:space="preserve">Other (see enclosed Notice to Employee)</text>
<text class="fs b" x="1074.5" y="1342.5" font-size="10.72" xml:space="preserve">15</text>
<text class="fs" x="1094.25" y="1342.5" font-size="10.72" xml:space="preserve">State</text>
<text class="fs" x="1144.25" y="1342.5" font-size="10.72" xml:space="preserve">Employer's state ID number</text>
<text class="fs" x="1366.75" y="1342.5" font-size="10.72" xml:space="preserve">16  State wages, tips, etc.</text>
<text class="fs" x="1530.5" y="1342.5" font-size="10.72" xml:space="preserve">17  State income tax</text>
<text class="fs" x="1689.5" y="1342.5" font-size="10.72" xml:space="preserve">18  Local wages, tips, etc.</text>
<text class="fs" x="1863.25" y="1342.5" font-size="10.72" xml:space="preserve">19  Local income tax</text>
<text class="fs" x="2022" y="1342.5" font-size="10.72" xml:space="preserve">20  Locality name</text>
<text class="fm" transform="translate(1085.0 1365.75) scale(1.0 0.885)" font-size="19.4" x="0.00 11.64" xml:space="preserve">WV</text>
<text class="fm" transform="translate(1183.34 1365.75) scale(1.0 0.885)" font-size="19.4" x="0.00 11.64 23.28 34.93 46.57 58.21 69.85 81.49 93.14 104.78" xml:space="preserve">643-86-468</text>
<text class="fm" transform="translate(1364.44 1365.75) scale(1.0 0.885)" font-size="19.4" x="0.00 11.64 23.28 34.93 46.57 58.21 70.64 81.49" xml:space="preserve">27219.<tspan class="z" font-size="18.59">0</tspan>5</text>
<text class="fm" transform="translate(1528.14 1365.75) scale(1.0 0.885)" font-size="19.4" x="0.00 11.64 23.28 34.93 46.57 58.21" xml:space="preserve">1517.1</text>
<text class="fm" transform="translate(1687.6 1365.75) scale(1.0 0.885)" font-size="19.4" x="0.00 11.64 23.28 34.93 46.57 58.21 69.85 81.49" xml:space="preserve">69617.91</text>
<text class="fm" transform="translate(1860.8 1365.75) scale(1.0 0.885)" font-size="19.4" x="0.00 11.64 23.28 34.93 46.57 58.21 69.85" xml:space="preserve">7935.37</text>
<text class="fm" transform="translate(1083.75 1406.5) scale(1.0 0.885)" font-size="19.4" x="0.00 11.64" xml:space="preserve">NJ</text>
<text class="fm" transform="translate(1183.83 1406.5) scale(1.0 0.885)" font-size="19.4" x="0.00 12.43 23.28 34.93 46.57 58.21 69.85 81.49 93.14 104.78" xml:space="preserve">4<tspan class="z" font-size="18.59">0</tspan>1-25-455</text>
<text class="fm" transform="translate(1364.59 1406.5) scale(1.0 0.885)" font-size="19.4" x="0.00 12.43 23.28 34.93 46.57 58.21 69.85 81.49" xml:space="preserve">3<tspan class="z" font-size="18.59">0</tspan>829.36</text>
<text class="fm" transform="translate(1528.14 1406.5) scale(1.0 0.885)" font-size="19.4" x="0.00 11.64 23.28 34.93 46.57 58.21 69.85" xml:space="preserve">1443.46</text>
<text class="fm" transform="translate(1687.84 1406.5) scale(1.0 0.885)" font-size="19.4" x="0.00 11.64 23.28 34.93 46.57 58.21 69.85 81.49" xml:space="preserve">53793.26</text>
<text class="fm" transform="translate(1860.89 1406.5) scale(1.0 0.885)" font-size="19.4" x="0.00 11.64 23.28 34.93 46.57 58.21 70.64 81.49" xml:space="preserve">11216.<tspan class="z" font-size="18.59">0</tspan>9</text>
<text class="fm" transform="translate(2021.16 1365.75) scale(1.0 0.885)" font-size="11.1" x="0.00 6.66 13.32 19.98 26.64 33.31 39.97 46.63 53.29 59.95 66.61 73.27 79.93 86.59 93.26" xml:space="preserve">Dominic Heights</text>
<text class="fm" transform="translate(2020.43 1406.5) scale(1.0 0.885)" font-size="14.06" x="0.00 8.44 16.87 25.31 33.75 42.19 50.62 59.06 67.50 75.94 84.37 92.81" xml:space="preserve">Robles Mount</text>
<text class="fs b" x="1188.25" y="1432" font-size="19.55" xml:space="preserve">Wage and Tax</text>
<text class="fs b" x="1188.25" y="1456.25" font-size="19.55" xml:space="preserve">Statement</text>
<text class="fs b" x="1073.25" y="1455.75" font-size="11.76" xml:space="preserve">Form  W-2</text>
<text class="fs" x="1812.5" y="1432" font-size="12.88" xml:space="preserve">Department of the Treasury--Internal Revenue Service</text>
<text class="fm yr" transform="translate(1535.35 1453.7) scale(0.9 1)" font-size="50" x="0.00 36.93 69.81 106.74" xml:space="preserve">2<tspan class="z" font-size="47.90">0</tspan>1<tspan class="z" font-size="47.90">0</tspan></text>
</g>
<g fill="#000">
<text class="fs" x="1711.25" y="896.25" font-size="10.69" xml:space="preserve">This information is being furnished to the Internal Revenue Service.  If you are required</text>
<text class="fs" x="1711.25" y="910" font-size="10.69" xml:space="preserve">to file a tax return, a negligence penalty or other sanction may be imposed on you if</text>
<text class="fs" x="1711.25" y="923" font-size="10.69" xml:space="preserve">this income is taxable and you fail to report it.</text>
<text class="fs b" x="1073.25" y="1474.5" font-size="14.04" xml:space="preserve">Copy C For EMPLOYEE'S RECORDS.</text>
<text class="fs b" x="1073.25" y="1491.5" font-size="14.04" xml:space="preserve">(See enclosed Notice to Employee.)</text>
<text class="fs b" x="1860.5" y="1453.35" font-size="12.85" xml:space="preserve">Safe, accurate,</text>
<text class="fs b" x="1860.5" y="1470.25" font-size="12.85" xml:space="preserve">FAST!  Use</text>
</g>
<g transform="translate(2022.25,1458.9) scale(0.9788)">
<ellipse cx="0" cy="0" rx="59" ry="13.9" fill="#231f20" transform="rotate(0.8)"/>
<g fill="#fff" stroke="#fff" font-family="Liberation Sans, Arial, sans-serif" font-weight="bold" font-style="italic">
<text x="-54.8" y="0.3" font-size="8" stroke-width="0.4" textLength="17.8" lengthAdjust="spacingAndGlyphs">IRS</text>
<text x="-40.6" y="7.8" font-size="25.5" stroke-width="1.3" textLength="18.6" lengthAdjust="spacingAndGlyphs">e</text>
<text x="3.2" y="7.6" font-size="20.6" stroke-width="1.2" textLength="40.5" lengthAdjust="spacingAndGlyphs">file</text>
</g>
<path d="M-21.2 1.75 L-7.7 -4.45 L-7.4 -1.15 L2.3 -4.65 L-12.1 4.15 L-11.6 0.65 Z" fill="#fff"/>
</g>
</svg>
</body></html>
